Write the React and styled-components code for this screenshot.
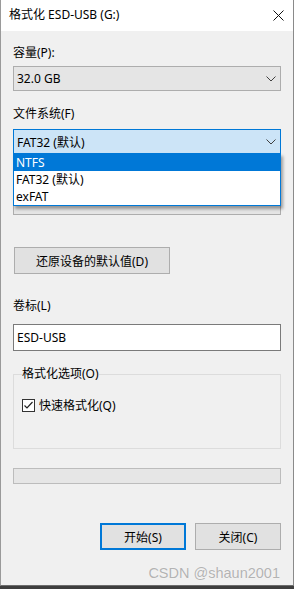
import React from 'react';
import styled, { createGlobalStyle } from 'styled-components';

const GlobalStyle = createGlobalStyle`
  html, body {
    margin: 0;
    padding: 0;
    background: #3e3e3e;
  }
  body {
    font-family: "Noto Sans", "Noto Sans CJK SC", sans-serif;
    font-size: 12px;
    color: #000;
  }
`;

//=-=-=-=-=-=-=-=-=-=-=-= WINDOW =-=-=-=-=-=-=-=-=-=-=-=
const Window = styled.div`
  width: 294px;
  height: 586px;
  box-sizing: border-box;
  display: flex;
  flex-direction: column;
  background: #f0f0f0;
  border-left: 1px solid #9a9a9a;
  border-right: 1px solid #8a8a8a;
  border-bottom: 1px solid #6c6c6c;
`;

const TitleBar = styled.div`
  height: 31px;
  flex-shrink: 0;
  background: #fff;
  display: flex;
  align-items: center;
  justify-content: space-between;
  padding: 0 9px 0 8px;
`;

const Title = styled.span`
  font-size: 12px;
  line-height: 16px;
  margin-top: -1px;
`;

const CloseIcon = styled.svg`
  width: 11px;
  height: 11px;
  margin-top: -1px;
`;

const Body = styled.div`
  flex: 1;
  display: flex;
  flex-direction: column;
  padding: 0 12px 0 12px;
`;

const Label = styled.div`
  line-height: 16px;
  height: 16px;
  margin-top: ${p => p.$mt}px;
`;

//=-=-=-=-=-=-=-=-=-=-=-= COMBO BOX =-=-=-=-=-=-=-=-=-=-=-=
const ComboWrap = styled.div`
  position: relative;
  margin-top: ${p => p.$mt}px;
`;

const Combo = styled.div`
  height: 25px;
  box-sizing: border-box;
  display: flex;
  align-items: center;
  justify-content: space-between;
  padding: 0 4px 0 3px;
  border: 1px solid ${p => (p.$focused ? '#0078d7' : '#adadad')};
  background: ${p => (p.$focused ? '#cce4f7' : '#e5e5e5')};
`;

const Chevron = styled.svg`
  width: 10px;
  height: 6px;
  margin-left: auto;
`;

const DropList = styled.ul`
  position: absolute;
  left: 0;
  right: 0;
  top: 24px;
  margin: 0;
  padding: 0;
  list-style: none;
  background: #fff;
  border: 1px solid #0078d7;
  box-shadow: 2px 3px 3px rgba(0, 0, 0, 0.35);
  z-index: 2;
`;

const DropItem = styled.li`
  height: 17px;
  line-height: 17px;
  padding-left: 2px;
  background: ${p => (p.$active ? '#0078d7' : '#fff')};
  color: ${p => (p.$active ? '#fff' : '#000')};
`;

//=-=-=-=-=-=-=-=-=-=-=-= BUTTONS / INPUTS =-=-=-=-=-=-=-=-=-=-=-=
const Button = styled.div`
  box-sizing: border-box;
  width: ${p => p.$w}px;
  height: 27px;
  display: flex;
  align-items: center;
  justify-content: center;
  background: #e1e1e1;
  border: ${p => (p.$default ? '2px solid #0078d7' : '1px solid #adadad')};
`;

const RestoreButton = styled(Button)`
  margin-top: 32px;
  margin-left: 1px;
`;

const TextBox = styled.div`
  margin-top: 10px;
  height: 27px;
  box-sizing: border-box;
  background: #fff;
  border: 1px solid #7a7a7a;
  display: flex;
  align-items: center;
  padding-left: 3px;
`;

const GroupBox = styled.fieldset`
  margin: 16px 0 0 0;
  padding: 0 0 0 8px;
  height: 82px;
  box-sizing: border-box;
  border: 1px solid #dcdcdc;
`;

const GroupTitle = styled.legend`
  padding: 0;
  line-height: 14px;
`;

const CheckRow = styled.div`
  display: flex;
  align-items: center;
  gap: 4px;
  margin-top: 15px;
`;

const CheckBox = styled.span`
  width: 13px;
  height: 13px;
  box-sizing: border-box;
  border: 1px solid #333;
  background: #fff;
  display: flex;
  align-items: center;
  justify-content: center;
`;

const Progress = styled.div`
  margin-top: 19px;
  height: 16px;
  box-sizing: border-box;
  border: 1px solid #bcbcbc;
  background: #e6e6e6;
`;

const ButtonRow = styled.div`
  margin-top: 39px;
  display: flex;
  justify-content: flex-end;
  gap: 9px;
`;

const Watermark = styled.div`
  margin-top: 14px;
  text-align: right;
  padding-right: 1px;
  font-family: "Liberation Sans", Arial, sans-serif;
  font-size: 14.5px;
  line-height: 18px;
  color: #b3b3b3;
  text-shadow: 0 0 1px #fff;
`;

function Caret() {
  return (
    <Chevron viewBox="0 0 10 6">
      <polyline points="0.5,0.5 5,5 9.5,0.5" fill="none" stroke="#404040" strokeWidth="1" />
    </Chevron>
  );
}

export default function App() {
  return (
    <>
      <GlobalStyle />
      <Window>
        <TitleBar>
          <Title>格式化 ESD-USB (G:)</Title>
          <CloseIcon viewBox="0 0 11 11">
            <path d="M0.5 0.5 L10.5 10.5 M10.5 0.5 L0.5 10.5" stroke="#111" strokeWidth="1" />
          </CloseIcon>
        </TitleBar>
        <Body>
          <Label $mt={14}>容量(P):</Label>
          <ComboWrap $mt={5}>
            <Combo>
              <span>32.0 GB</span>
              <Caret />
            </Combo>
          </ComboWrap>

          <Label $mt={15}>文件系统(F)</Label>
          <ComboWrap $mt={7}>
            <Combo $focused>
              <span>FAT32 (默认)</span>
              <Caret />
            </Combo>
            <DropList>
              <DropItem $active>NTFS</DropItem>
              <DropItem>FAT32 (默认)</DropItem>
              <DropItem>exFAT</DropItem>
            </DropList>
          </ComboWrap>

          {/* allocation unit field, hidden under the open list */}
          <Label $mt={14} />
          <ComboWrap $mt={6}>
            <Combo>
              <Caret />
            </Combo>
          </ComboWrap>

          <RestoreButton $w={156}>还原设备的默认值(D)</RestoreButton>

          <Label $mt={24}>卷标(L)</Label>
          <TextBox>ESD-USB</TextBox>

          <GroupBox>
            <GroupTitle>格式化选项(O)</GroupTitle>
            <CheckRow>
              <CheckBox>
                <svg width="11" height="11" viewBox="0 0 11 11">
                  <polyline points="1.5,5.5 4,8 9.5,2" fill="none" stroke="#222" strokeWidth="1.2" />
                </svg>
              </CheckBox>
              <span>快速格式化(Q)</span>
            </CheckRow>
          </GroupBox>

          <Progress />

          <ButtonRow>
            <Button $w={86} $default>开始(S)</Button>
            <Button $w={86}>关闭(C)</Button>
          </ButtonRow>

          <Watermark>CSDN @shaun2001</Watermark>
        </Body>
      </Window>
    </>
  );
}
